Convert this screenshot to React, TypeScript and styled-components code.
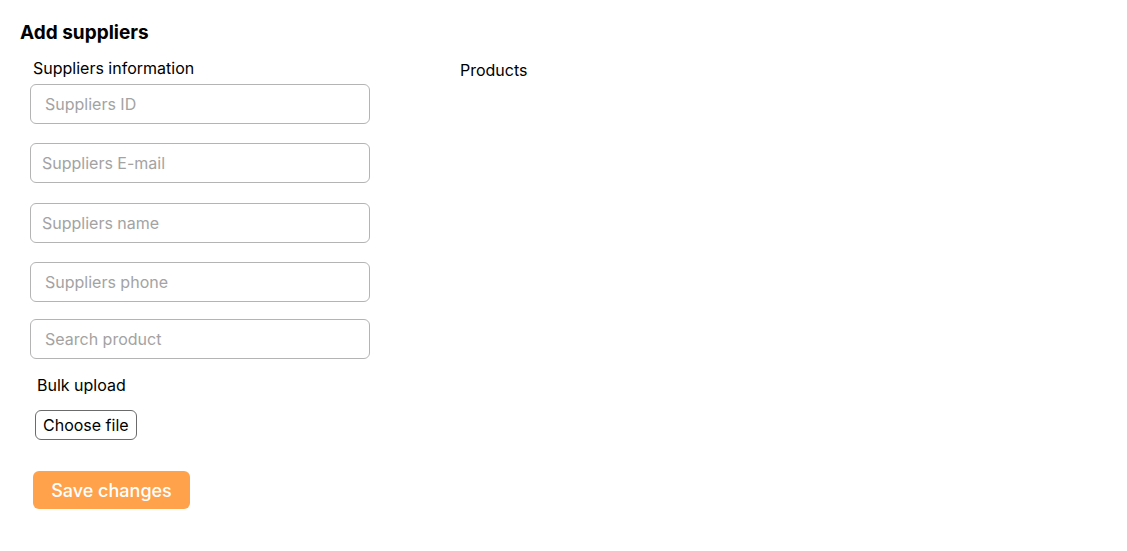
import React from 'react';
import styled, { createGlobalStyle } from 'styled-components';

const GlobalStyle = createGlobalStyle`
    body {
        margin: 0;
        background: #ffffff;
        font-family: Inter, "Noto Sans", sans-serif;
        color: #000;
    }
`;

const Page = styled.div`
    padding: 21px 20px;
`;

const Title = styled.h1`
    margin: 0;
    font-size: 19px;
    font-weight: 700;
    line-height: 24px;
`;

const Columns = styled.div`
    display: flex;
    gap: 90px;
    margin-top: 13px;
`;

const LeftColumn = styled.div`
    display: flex;
    flex-direction: column;
    width: 340px;
    padding-left: 10px;
`;

const SectionLabel = styled.div<{ $indent?: number; $top?: number }>`
    font-size: 16px;
    line-height: 20px;
    padding-left: ${(p) => p.$indent ?? 0}px;
    margin-top: ${(p) => p.$top ?? 0}px;
`;

const Field = styled.input<{ $gap?: number; $pad?: number }>`
    box-sizing: border-box;
    width: 340px;
    height: 40px;
    margin-top: ${(p) => p.$gap ?? 20}px;
    padding: 0 ${(p) => p.$pad ?? 14}px;
    border: 1px solid #b4b4b4;
    border-radius: 6px;
    font-family: inherit;
    font-size: 16px;
    outline: none;

    &::placeholder {
        color: #a3a3a3;
    }
`;

const FileButton = styled.button`
    align-self: flex-start;
    margin: 15px 0 0 5px;
    height: 30px;
    padding: 0 7px;
    background: #fff;
    border: 1px solid #6b6b6b;
    border-radius: 6px;
    font-family: inherit;
    font-size: 16px;
    color: #000;
`;

const SaveButton = styled.button`
    align-self: flex-start;
    margin: 31px 0 0 3px;
    height: 38px;
    width: 157px;
    background: #ffa24b;
    border: none;
    border-radius: 6px;
    font-family: inherit;
    font-size: 18px;
    font-weight: 500;
    color: #fff;
`;

const RightColumn = styled.div`
    padding-top: 2px;
`;

const App: React.FC = () => {
    return (
        <Page>
            <GlobalStyle />
            <Title>Add suppliers</Title>
            <Columns>
                <LeftColumn>
                    <SectionLabel $indent={3}>Suppliers information</SectionLabel>
                    <Field $gap={6} placeholder="Suppliers ID" />
                    <Field $gap={19} $pad={11} placeholder="Suppliers E-mail" />
                    <Field $gap={20} $pad={11} placeholder="Suppliers name" />
                    <Field $gap={19} placeholder="Suppliers phone" />
                    <Field $gap={17} placeholder="Search product" />
                    <SectionLabel $indent={7} $top={16}>Bulk upload</SectionLabel>
                    <FileButton>Choose file</FileButton>
                    <SaveButton>Save changes</SaveButton>
                </LeftColumn>
                <RightColumn>
                    <SectionLabel>Products</SectionLabel>
                </RightColumn>
            </Columns>
        </Page>
    );
};

export default App;
